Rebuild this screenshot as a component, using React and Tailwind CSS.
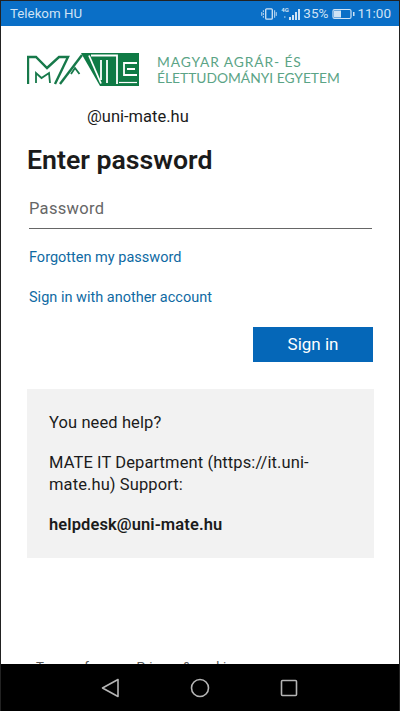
import { useState } from 'react'

function Logo() {
  return (
    <svg width="113" height="36" viewBox="27 52 113 36" fill="none" className="shrink-0">
      {/* M */}
      <path d="M28 84V57h8l11 11 12-11h9L55 84" stroke="#17794a" strokeWidth="2.4" />
      <path d="M36 83V73l5.5 5L49 73l1 10" stroke="#17794a" strokeWidth="1.8" />
      {/* A */}
      <path d="M60 84L82 55" stroke="#17794a" strokeWidth="2.4" />
      <path d="M71 74l4-6 4.5 6" stroke="#17794a" strokeWidth="1.8" />
      {/* T + E block */}
      <path d="M81 53h58v33h-39z" fill="#0f7a45" />
      <path d="M89 55.5l12 28" stroke="#fff" strokeWidth="1.8" />
      <path d="M91 55.5h26V84" stroke="#fff" strokeWidth="1.8" />
      <path d="M101 60v20M107 60v23" stroke="#fff" strokeWidth="1.8" />
      <path d="M137 63h-13v12h13M127 69h8" stroke="#fff" strokeWidth="1.8" />
      <path d="M119 82.5h18" stroke="#fff" strokeWidth="1.2" />
    </svg>
  )
}

function StatusIcons() {
  return (
    <div className="flex items-center text-[#cfe3f5]">
      {/* vibrate */}
      <svg width="16" height="14" viewBox="0 0 17 14" fill="none" stroke="currentColor">
        <rect x="5" y="1.5" width="7" height="11" rx="1" strokeWidth="1.4" />
        <path d="M2.5 3v2M2.5 6v2M2.5 9v2M0.8 5v4M14.5 3v8M16.2 5v4" strokeWidth="1" />
      </svg>
      <div className="relative w-[20px] h-[14px] ml-[4px]">
        <span className="absolute left-0 top-[-1px] text-[6px] font-bold leading-[8px]">4G</span>
        <svg width="20" height="14" viewBox="0 0 20 14" fill="currentColor" className="absolute left-0 top-0">
          <rect x="3" y="9" width="1.5" height="2" opacity="0.5" />
          <rect x="8" y="10" width="2" height="3" />
          <rect x="11" y="8" width="2" height="5" />
          <rect x="14" y="5" width="2" height="8" />
          <rect x="17" y="2" width="2" height="11" />
        </svg>
      </div>
      <span className="text-[13.5px] ml-[2px]">35%</span>
      <svg width="24" height="12" viewBox="0 0 24 12" fill="none" className="ml-[4px]">
        <rect x="1" y="1.5" width="18" height="9" rx="1.5" stroke="currentColor" strokeWidth="1.2" />
        <rect x="2" y="2.5" width="7" height="7" fill="currentColor" />
        <rect x="21" y="4" width="1.5" height="4" fill="currentColor" />
      </svg>
      <span className="text-[13.5px] ml-[1px]">11:00</span>
    </div>
  )
}

export default function App() {
  const [password, setPassword] = useState('')

  return (
    <div className="w-[400px] h-[711px] flex flex-col overflow-hidden bg-white font-['Roboto',sans-serif] border-x border-t border-[#222]">
      <div className="h-[25px] shrink-0 bg-[#0a6fc7] flex items-center justify-between pl-[9px] pr-[8px] text-[#cfe3f5]">
        <span className="text-[13.3px]">Telekom HU</span>
        <StatusIcons />
      </div>

      <div className="flex-1 overflow-hidden pl-[26px] pr-[26px] pt-[26px]">
        <div className="flex items-center h-[36px]">
          <Logo />
          <div className="ml-[17px] text-[#5ba486] text-[13.8px] leading-[16px] whitespace-nowrap font-['Lato',sans-serif]">
            <div className="tracking-[0.9px]">MAGYAR AGRÁR- ÉS</div>
            <div>ÉLETTUDOMÁNYI EGYETEM</div>
          </div>
        </div>

        <div className="mt-[17px] pl-[60px] text-[16.5px] leading-[24px] text-[#1b1b1b]">@uni-mate.hu</div>

        <h1 className="mt-[13px] text-[26.7px] leading-[36px] font-semibold text-[#1b1b1b]">Enter password</h1>

        <input
          type="password"
          value={password}
          onChange={e => setPassword(e.target.value)}
          placeholder="Password"
          className="block mt-[11px] ml-[2px] w-[343px] h-[40px] border-b border-[#666] text-[16.5px] tracking-[0.3px] outline-none placeholder:text-[#666]"
        />

        <div className="mt-[19px] ml-[2px] text-[14.5px] leading-[20px] text-[#0f6aa3]">
          <a className="block">Forgotten my password</a>
          <a className="block mt-[20px]">Sign in with another account</a>
        </div>

        <div className="flex justify-end mt-[19px]">
          <button className="w-[120px] h-[35px] bg-[#0567b8] text-white text-[17px]">Sign in</button>
        </div>

        <div className="mt-[27px] w-[347px] h-[169px] bg-[#f2f2f2] px-[22px] pt-[23px] text-[16.5px] leading-[22px] tracking-[0.1px] text-[#1b1b1b]">
          <p>You need help?</p>
          <p className="mt-[18px]">MATE IT Department (https://it.uni-<br />mate.hu) Support:</p>
          <p className="mt-[18px] font-semibold">helpdesk@uni-mate.hu</p>
        </div>

        <div className="mt-[99px] ml-[9px] flex gap-[23px] text-[13.3px] text-[#555]">
          <span>Terms of use</span>
          <span>Privacy &amp; cookies</span>
        </div>
      </div>

      <div className="h-[47px] shrink-0 bg-black flex items-center justify-center gap-[70px] pr-[2px] -mx-px relative z-10">
        <svg width="20" height="20" viewBox="0 0 20 20" fill="none" stroke="#b5b5b5" strokeWidth="1.6" strokeLinejoin="round">
          <path d="M18 1.5v17L2.5 10z" />
        </svg>
        <svg width="20" height="20" viewBox="0 0 20 20" fill="none" stroke="#b5b5b5" strokeWidth="1.6">
          <circle cx="10" cy="10" r="8.5" />
        </svg>
        <svg width="18" height="18" viewBox="0 0 18 18" fill="none" stroke="#b5b5b5" strokeWidth="1.6">
          <rect x="1.5" y="1.5" width="15" height="15" rx="1" />
        </svg>
      </div>
    </div>
  )
}
